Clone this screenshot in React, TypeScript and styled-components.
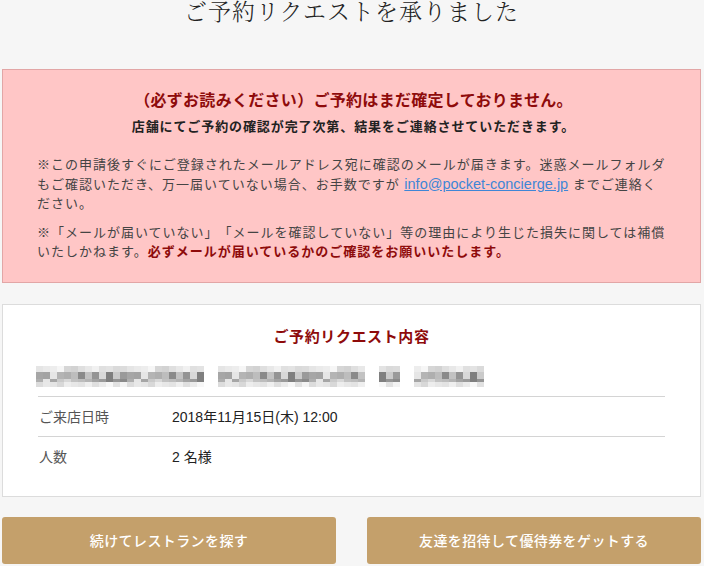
import React from "react";
import styled, { createGlobalStyle } from "styled-components";

const GlobalStyle = createGlobalStyle`
  html, body {
    margin: 0;
    padding: 0;
    background: #f6f6f6;
  }
  body {
    font-family: "Liberation Sans", "Noto Sans CJK JP", sans-serif;
    color: #333;
    text-spacing-trim: space-all;
  }
`;

const Page = styled.div`
  padding: 0 3px 0 2px;
`;

const PageTitle = styled.h1`
  margin: -5px 0 0;
  height: 74px;
  font-family: "Noto Serif CJK JP", "Noto Sans CJK JP", serif;
  font-weight: 300;
  font-size: 23px;
  line-height: 32px;
  letter-spacing: 1px;
  text-align: center;
  color: #222;
`;

const Notice = styled.section`
  background: #ffc6c6;
  border: 1px solid #e2a6a6;
  padding: 19px 30px 20px 34px;
  letter-spacing: 1px;
`;

const NoticeHead = styled.p`
  margin: 0;
  text-align: center;
  font-weight: bold;
  font-size: 16px;
  line-height: 24px;
  letter-spacing: 0.3px;
  color: #8e0b0b;
`;

const NoticeSub = styled.p`
  margin: 2px 0 0;
  text-align: center;
  font-weight: bold;
  font-size: 13px;
  line-height: 24px;
  letter-spacing: 0.9px;
  color: #222;
`;

const NoticeText = styled.p<{ $first?: boolean }>`
  margin: ${(p) => (p.$first ? "16px" : "9px")} 0 0;
  font-size: 13px;
  line-height: 19.5px;
  color: #444;
`;

const Strong = styled.strong`
  color: #8e0b0b;
`;

const MailLink = styled.a`
  color: #3f86d6;
  text-decoration: underline;
  letter-spacing: 0;
  font-size: 14.5px;
`;

const Card = styled.section`
  margin-top: 21px;
  background: #fff;
  border: 1px solid #dcdcdc;
  padding: 20px 35px 20px 35px;
`;

const CardTitle = styled.h2`
  margin: 0;
  text-align: center;
  font-size: 15px;
  line-height: 24px;
  font-weight: bold;
  color: #8e0b0b;
  letter-spacing: 0.6px;
`;

const Mosaic = styled.svg`
  display: block;
  margin: 16px 0 9px -2px;
`;

const Row = styled.div`
  display: grid;
  grid-template-columns: 133px 1fr;
  align-items: center;
  height: 39px;
  border-top: 1px solid #d4d4d4;
  font-size: 14px;
  padding-left: 1px;
`;

const Label = styled.span`
  color: #555;
`;

const Value = styled.span`
  color: #222;
`;

const Buttons = styled.div`
  display: flex;
  gap: 31px;
  margin-top: 20px;
`;

const Button = styled.button`
  flex: 1;
  height: 47px;
  border: none;
  border-radius: 3px;
  background: #c4a06b;
  color: #fff;
  font-family: "Noto Sans CJK JP", sans-serif;
  font-size: 14px;
  font-weight: 500;
  letter-spacing: 0.4px;
  cursor: pointer;
`;

const shades = [
  "#bdbdbd", "#a6a6a6", "#949494", "#b4b4b4", "#cacaca", "#8a8a8a", "#a3a3a3",
  "#d8d8d8", "#afafaf", "#9a9a9a", "#c2c2c2", "#e6e6e6", "#7f7f7f",
];

function MosaicLine() {
  const cells: React.ReactNode[] = [];
  const gaps = new Set([24, 25, 47, 48, 52, 53]);
  for (let i = 0; i < 64; i++) {
    if (gaps.has(i)) continue;
    const x = i * 7;
    const top = shades[(i * 7 + 3) % shades.length];
    const mid = shades[(i * 5 + 1) % shades.length];
    const low = shades[(i * 3 + 8) % shades.length];
    const bot = shades[(i * 11 + 5) % shades.length];
    cells.push(
      <g key={i}>
        <rect x={x} y={1} width={7} height={6} fill={top} opacity={0.35} />
        <rect x={x} y={7} width={7} height={7} fill={mid} />
        <rect x={x} y={14} width={7} height={3} fill={low} />
        <rect x={x} y={17} width={7} height={5} fill={bot} opacity={0.3} />
      </g>
    );
  }
  return (
    <Mosaic width="448" height="22" viewBox="0 0 448 22">
      {cells}
    </Mosaic>
  );
}

export default function App() {
  return (
    <Page>
      <GlobalStyle />
      <PageTitle>ご予約リクエストを承りました</PageTitle>
      <Notice>
        <NoticeHead>（必ずお読みください）ご予約はまだ確定しておりません。</NoticeHead>
        <NoticeSub>店舗にてご予約の確認が完了次第、結果をご連絡させていただきます。</NoticeSub>
        <NoticeText $first>
          ※この申請後すぐにご登録されたメールアドレス宛に確認のメールが届きます。迷惑メールフォルダもご確認いただき、万一届いていない場合、お手数ですが{" "}
          <MailLink href="#">info@pocket-concierge.jp</MailLink> までご連絡く
          <br />
          ださい。
        </NoticeText>
        <NoticeText>
          ※「メールが届いていない」「メールを確認していない」等の理由により生じた損失に関しては補償いたしかねます。
          <Strong>必ずメールが届いているかのご確認をお願いいたします。</Strong>
        </NoticeText>
      </Notice>
      <Card>
        <CardTitle>ご予約リクエスト内容</CardTitle>
        <MosaicLine />
        <Row>
          <Label>ご来店日時</Label>
          <Value>2018年11月15日(木) 12:00</Value>
        </Row>
        <Row>
          <Label>人数</Label>
          <Value>2 名様</Value>
        </Row>
      </Card>
      <Buttons>
        <Button>続けてレストランを探す</Button>
        <Button>友達を招待して優待券をゲットする</Button>
      </Buttons>
    </Page>
  );
}
